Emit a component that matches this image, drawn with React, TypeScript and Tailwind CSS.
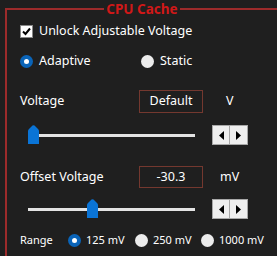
import React from "react";

const Radio = ({ checked }: { checked?: boolean }) =>
    checked ? (
        <span className="w-[13px] h-[13px] rounded-full bg-[#0a64b8] flex items-center justify-center shrink-0">
            <span className="w-[5px] h-[5px] rounded-full bg-white"></span>
        </span>
    ) : (
        <span className="w-[13px] h-[13px] rounded-full bg-[#ececec] shrink-0"></span>
    );

const Thumb = () => (
    <svg width="11" height="19" viewBox="0 0 11 19">
        <path d="M0 6 Q0 5 1 4 L4.5 0.6 Q5.5 -0.2 6.5 0.6 L10 4 Q11 5 11 6 V19 H0 Z" fill="#0a74d6" />
    </svg>
);

const Spin = () => (
    <div className="flex h-[20px]">
        <button className="w-[18px] h-full bg-[#efefef] border border-[#a8a8a8] flex items-center justify-center">
            <svg width="5" height="9" viewBox="0 0 5 9"><path d="M5 0 V9 L0 4.5 Z" fill="#000" /></svg>
        </button>
        <button className="w-[18px] h-full bg-[#efefef] border border-l-0 border-[#a8a8a8] flex items-center justify-center">
            <svg width="5" height="9" viewBox="0 0 5 9"><path d="M0 0 V9 L5 4.5 Z" fill="#000" /></svg>
        </button>
    </div>
);

const Slider = ({ pos }: { pos: number }) => (
    <div className="relative w-[167px] h-[20px] ml-[8px] flex items-center">
        <div className="w-full h-[3px] bg-[#e3e3e3]"></div>
        <div className="absolute top-0" style={{ left: pos }}>
            <Thumb />
        </div>
    </div>
);

export default function App() {
    return (
        <div className="w-[277px] h-[256px] overflow-hidden bg-[#1f1f1f] text-white font-['Noto_Sans',sans-serif]">
            <fieldset className="mx-[5px] h-[280px] border-2 border-[#9c2b2b] px-[13px]">
                <legend className="mx-auto px-[2px] text-[13.5px] leading-[18px] font-bold text-[#d01818]">CPU Cache</legend>

                {/* checkbox */}
                <div className="mt-[4px] h-[18px] flex items-center gap-[6px]">
                    <span className="w-[13px] h-[13px] bg-white border border-[#888] flex items-center justify-center">
                        <svg width="9" height="9" viewBox="0 0 9 9"><path d="M1 4.5 L3.5 7 L8 1.5" stroke="#000" strokeWidth="2" fill="none" /></svg>
                    </span>
                    <span className="text-[12.5px]">Unlock Adjustable Voltage</span>
                </div>

                {/* mode */}
                <div className="mt-[12px] h-[18px] flex items-center text-[12.5px]">
                    <div className="w-[121px] flex items-center gap-[6px]">
                        <Radio checked />
                        <span>Adaptive</span>
                    </div>
                    <div className="flex items-center gap-[6px]">
                        <Radio />
                        <span>Static</span>
                    </div>
                </div>

                {/* voltage */}
                <div className="mt-[20px] h-[23px] flex items-center text-[12.5px]">
                    <span className="w-[119px]">Voltage</span>
                    <div className="w-[64px] h-full border border-[#74382f] flex items-center justify-center">Default</div>
                    <span className="ml-[23px]">V</span>
                </div>
                <div className="mt-[12px] h-[20px] flex items-center">
                    <Slider pos={0} />
                    <div className="ml-[17px]"><Spin /></div>
                </div>

                {/* offset */}
                <div className="mt-[21px] h-[22px] flex items-center text-[12.5px]">
                    <span className="w-[119px]">Offset Voltage</span>
                    <div className="w-[64px] h-full border border-[#74382f] flex items-center justify-center">-30.3</div>
                    <span className="ml-[17px]">mV</span>
                </div>
                <div className="mt-[11px] h-[20px] flex items-center">
                    <Slider pos={59} />
                    <div className="ml-[17px]"><Spin /></div>
                </div>

                {/* range */}
                <div className="mt-[12px] h-[18px] flex items-center text-[11px] whitespace-nowrap">
                    <span className="w-[48px]">Range</span>
                    <div className="flex items-center gap-[5px] w-[67px]">
                        <Radio checked />
                        <span>125 mV</span>
                    </div>
                    <div className="flex items-center gap-[5px] w-[66px]">
                        <Radio />
                        <span>250 mV</span>
                    </div>
                    <div className="flex items-center gap-[5px]">
                        <Radio />
                        <span>1000 mV</span>
                    </div>
                </div>
            </fieldset>
        </div>
    );
}
